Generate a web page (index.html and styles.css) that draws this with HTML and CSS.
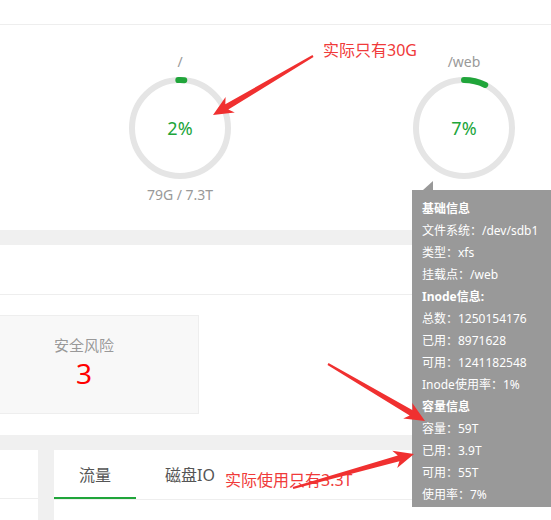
FILE: index.html
```html
<!DOCTYPE html>
<html lang="zh-CN">
<head>
    <meta charset="UTF-8">
    <meta name="viewport" content="width=device-width, initial-scale=1.0">
    <title>磁盘</title>
    <link rel="stylesheet" href="styles.css">
</head>
<body>
    <div class="topbar"></div>

    <div class="panel disk-panel">
        <div class="disk-list">
            <div class="disk">
                <div class="disk-name">/</div>
                <div class="ring">
                    <svg width="102" height="102" viewBox="0 0 102 102">
                        <circle cx="51" cy="51" r="48" class="ring-bg"/>
                        <circle cx="51" cy="51" r="48" class="ring-val" stroke-dasharray="6 400" transform="rotate(-92 51 51)"/>
                    </svg>
                    <span class="ring-text">2%</span>
                </div>
                <div class="disk-size">79G / 7.3T</div>
            </div>
            <div class="disk">
                <div class="disk-name">/web</div>
                <div class="ring">
                    <svg width="102" height="102" viewBox="0 0 102 102">
                        <circle cx="51" cy="51" r="48" class="ring-bg"/>
                        <circle cx="51" cy="51" r="48" class="ring-val" stroke-dasharray="22 400" transform="rotate(-90 51 51)"/>
                    </svg>
                    <span class="ring-text">7%</span>
                </div>
                <div class="disk-size">&nbsp;</div>
            </div>
        </div>
    </div>

    <div class="panel safe-panel">
        <div class="panel-title"></div>
        <div class="panel-body">
            <div class="stat-card">
                <div class="stat-name">安全风险</div>
                <div class="stat-num">3</div>
            </div>
        </div>
    </div>

    <div class="bottom-row">
        <div class="side-box">
            <div class="side-head"></div>
        </div>
        <div class="chart-box">
            <div class="tabs">
                <span class="tab active">流量</span>
                <span class="tab">磁盘IO</span>
            </div>
        </div>
    </div>

    <!-- 悬浮提示 -->
    <div class="tip">
        <p class="bold">基础信息</p>
        <p>文件系统：/dev/sdb1</p>
        <p>类型：xfs</p>
        <p>挂载点：/web</p>
        <p class="bold">Inode信息:</p>
        <p>总数：1250154176</p>
        <p>已用：8971628</p>
        <p>可用：1241182548</p>
        <p>Inode使用率：1%</p>
        <p class="bold">容量信息</p>
        <p>容量：59T</p>
        <p>已用：3.9T</p>
        <p>可用：55T</p>
        <p>使用率：7%</p>
    </div>

    <!-- 标注 -->
    <span class="note note-1">实际只有30G</span>
    <span class="note note-2">实际使用只有3.3T</span>
    <svg class="marks" width="551" height="520" viewBox="0 0 551 520">
        <polygon points="312.5,55.1 225.3,104.3 225.6,97.1 213,115 234.8,112.6 228.3,109.5 313.5,56.9"/>
        <polygon points="327.5,364.9 409.7,415.5 403.2,418.6 425,421 412.3,403.1 412.7,410.3 328.5,363.1"/>
        <polygon points="293.3,489 399.4,461.2 397.2,468.1 414,454 392.3,450.7 397.8,455.4 292.7,487"/>
    </svg>
</body>
</html>
```

FILE: styles.css
```css
html {
    overflow: hidden;
}
body {
    margin: 0;
    background-color: #f0f0f0;
    font-family: "Noto Sans", "Noto Sans CJK SC", sans-serif;
    color: #666;
    position: relative;
    height: 520px;
    overflow: hidden;
}
.topbar {
    height: 24px;
    background-color: #fff;
    border-bottom: 1px solid #eee;
}
.panel {
    background-color: #fff;
}
.disk-panel {
    height: 205px;
    margin-bottom: 15px;
    overflow: hidden;
}
.disk-list {
    display: flex;
    padding-left: 38px;
}
.disk {
    width: 284px;
    flex-shrink: 0;
    display: flex;
    flex-direction: column;
    align-items: center;
    padding-top: 27px;
}
.disk-name,
.disk-size {
    font-size: 14px;
    line-height: 20px;
    color: #999;
}
.ring {
    position: relative;
    width: 102px;
    height: 102px;
    margin-top: 5px;
}
.ring svg {
    display: block;
}
.ring-bg {
    fill: none;
    stroke: #e5e5e5;
    stroke-width: 6;
}
.ring-val {
    fill: none;
    stroke: #20a53a;
    stroke-width: 6;
    stroke-linecap: round;
}
.ring-text {
    position: absolute;
    left: 0;
    right: 0;
    top: 39px;
    text-align: center;
    font-size: 18px;
    line-height: 24px;
    color: #20a53a;
}
.disk-size {
    margin-top: 6px;
}
.panel-title {
    height: 49px;
    border-bottom: 1px solid #eee;
}
.panel-body {
    height: 140px;
    padding-top: 20px;
    box-sizing: border-box;
}
.stat-card {
    width: 230px;
    height: 99px;
    margin-left: -31px;
    box-sizing: border-box;
    background-color: #f8f8f8;
    border: 1px solid #eee;
    text-align: center;
}
.stat-name {
    font-size: 15px;
    line-height: 20px;
    color: #999;
    margin-top: 19px;
}
.stat-num {
    font-size: 28px;
    line-height: 36px;
    color: #f00;
}
.bottom-row {
    display: flex;
    gap: 16px;
    margin-top: 15px;
    height: 70px;
}
.side-box {
    width: 38px;
    background-color: #fff;
}
.side-head {
    height: 48px;
    border-bottom: 1px solid #eee;
}
.chart-box {
    flex: 1;
    background-color: #fff;
}
.tabs {
    display: flex;
    gap: 4px;
    height: 49px;
    border-bottom: 1px solid #eee;
}
.tab {
    padding: 0 25px;
    height: 47px;
    line-height: 51px;
    font-size: 16px;
    color: #555;
    border-bottom: 2px solid transparent;
}
.tab.active {
    border-bottom-color: #20a53a;
}
.tip {
    position: absolute;
    left: 412px;
    top: 190px;
    width: 150px;
    height: 317px;
    box-sizing: border-box;
    padding: 8px 10px 0;
    background-color: #999;
    color: #fff;
    font-size: 12px;
    line-height: 22px;
}
.tip::before {
    content: "";
    position: absolute;
    left: 11px;
    top: -9px;
    border-left: 10px solid transparent;
    border-bottom: 9px solid #999;
}
.tip p {
    margin: 0;
    white-space: nowrap;
}
.tip .bold {
    font-weight: bold;
}
.note {
    position: absolute;
    font-size: 16px;
    line-height: 22px;
    color: #f03a3a;
    white-space: nowrap;
}
.note-1 {
    left: 323px;
    top: 39px;
}
.note-2 {
    left: 225px;
    top: 469px;
}
.marks {
    position: absolute;
    left: 0;
    top: 0;
    fill: #f03030;
}
```
